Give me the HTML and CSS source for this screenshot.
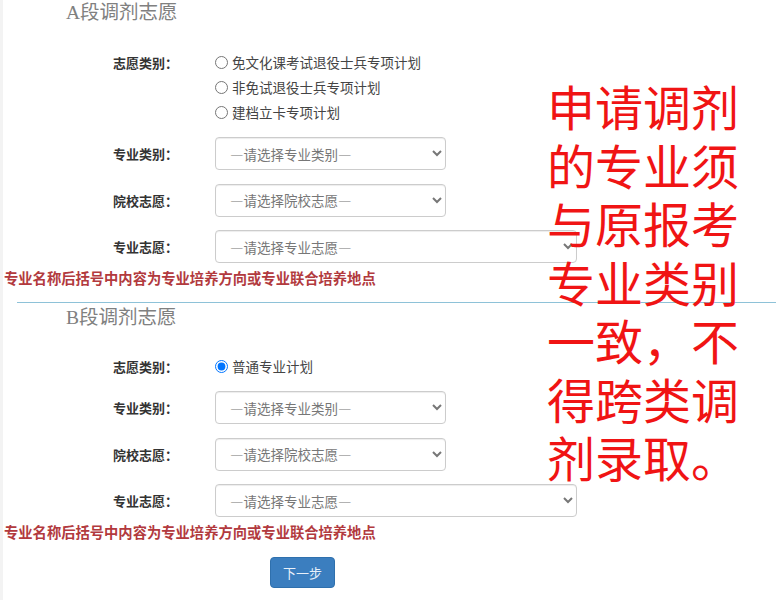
FILE: index.html
```html
<!DOCTYPE html>
<html lang="zh-CN">
<head>
  <meta charset="UTF-8">
  <meta name="viewport" content="width=device-width, initial-scale=1.0">
  <title>调剂志愿</title>
  <link rel="stylesheet" href="styles.css">
</head>
<body>
  <div class="page">
    <section class="block">
      <h3 class="block-title">A段调剂志愿</h3>

      <div class="row row-radio">
        <span class="row-label">志愿类别：</span>
        <div class="radio-list">
          <label class="radio"><input type="radio" name="a-type">免文化课考试退役士兵专项计划</label>
          <label class="radio"><input type="radio" name="a-type">非免试退役士兵专项计划</label>
          <label class="radio"><input type="radio" name="a-type">建档立卡专项计划</label>
        </div>
      </div>
      <div class="row row-first">
        <span class="row-label">专业类别：</span>
        <select class="field"><option>—请选择专业类别—</option></select>
      </div>
      <div class="row">
        <span class="row-label">院校志愿：</span>
        <select class="field"><option>—请选择院校志愿—</option></select>
      </div>
      <div class="row">
        <span class="row-label">专业志愿：</span>
        <select class="field field-wide"><option>—请选择专业志愿—</option></select>
      </div>
      <p class="tip">专业名称后括号中内容为专业培养方向或专业联合培养地点</p>
    </section>

    <hr class="divider">

    <section class="block">
      <h3 class="block-title title-b">B段调剂志愿</h3>

      <div class="row row-radio row-radio-b">
        <span class="row-label">志愿类别：</span>
        <div class="radio-list">
          <label class="radio"><input type="radio" name="b-type" checked>普通专业计划</label>
        </div>
      </div>
      <div class="row row-first">
        <span class="row-label">专业类别：</span>
        <select class="field"><option>—请选择专业类别—</option></select>
      </div>
      <div class="row">
        <span class="row-label">院校志愿：</span>
        <select class="field"><option>—请选择院校志愿—</option></select>
      </div>
      <div class="row">
        <span class="row-label">专业志愿：</span>
        <select class="field field-wide"><option>—请选择专业志愿—</option></select>
      </div>
      <p class="tip">专业名称后括号中内容为专业培养方向或专业联合培养地点</p>
    </section>

    <button class="next-btn">下一步</button>

    <div class="notice">申请调剂的专业须与原报考专业类别一致，不得跨类调剂录取。</div>
  </div>
</body>
</html>
```

FILE: styles.css
```css
body {
  margin: 0;
  background: #fff;
  font-family: "Noto Sans CJK SC", "Noto Sans", sans-serif;
  font-size: 13px;
  color: #333;
}
.page {
  position: relative;
  min-height: 600px;
  padding-left: 4px;
  border-left: 3px solid #f3f3f3;
  box-sizing: border-box;
  overflow: hidden;
}

.block-title {
  margin: 0 0 0 59px;
  font-family: "Liberation Serif", "Noto Sans CJK SC", serif;
  font-size: 19.5px;
  font-weight: normal;
  line-height: 26px;
  color: #808080;
}
.title-b {
  margin-top: 2px;
}

.row {
  display: grid;
  grid-template-columns: 171px auto;
  column-gap: 37px;
  align-items: center;
  margin-top: 13.5px;
}
.row-label {
  text-align: right;
  font-weight: bold;
  color: #333;
}
.row-radio {
  align-items: start;
  margin-top: 24px;
  line-height: 25px;
}
.row-radio-b {
  margin-top: 23px;
}
.row-first {
  margin-top: 12px;
}

.radio-list {
  display: flex;
  flex-direction: column;
}
.radio {
  display: flex;
  align-items: center;
  height: 25px;
  font-size: 13.5px;
  color: #444;
}
.radio input {
  width: 13px;
  height: 13px;
  margin: 0 4px 0 0;
}

.field {
  width: 231px;
  height: 33px;
  padding: 0 10px;
  border: 1px solid #ccc;
  border-radius: 4px;
  background: #fff;
  box-shadow: inset 0 1px 1px rgba(0,0,0,0.075);
  font-family: inherit;
  font-size: 13.5px;
  color: #777;
}
.field-wide {
  width: 362px;
}

.tip {
  margin: 5px 0 0 -3px;
  line-height: 20px;
  font-size: 14.3px;
  font-weight: bold;
  color: #b23a3e;
}

.divider {
  margin: 14px 0 0 10px;
  border: none;
  border-top: 1px solid #8ec2d8;
}

.next-btn {
  display: block;
  margin: 15px 0 0 263px;
  width: 65px;
  height: 31px;
  border: 1px solid #2f70ad;
  border-radius: 4px;
  background: #3b7ebf;
  color: #e8f0f9;
  font-family: inherit;
  font-size: 13px;
}

.notice {
  position: absolute;
  left: 544px;
  top: 76px;
  width: 196px;
  font-size: 48px;
  line-height: 58.5px;
  color: #f01414;
}
```
